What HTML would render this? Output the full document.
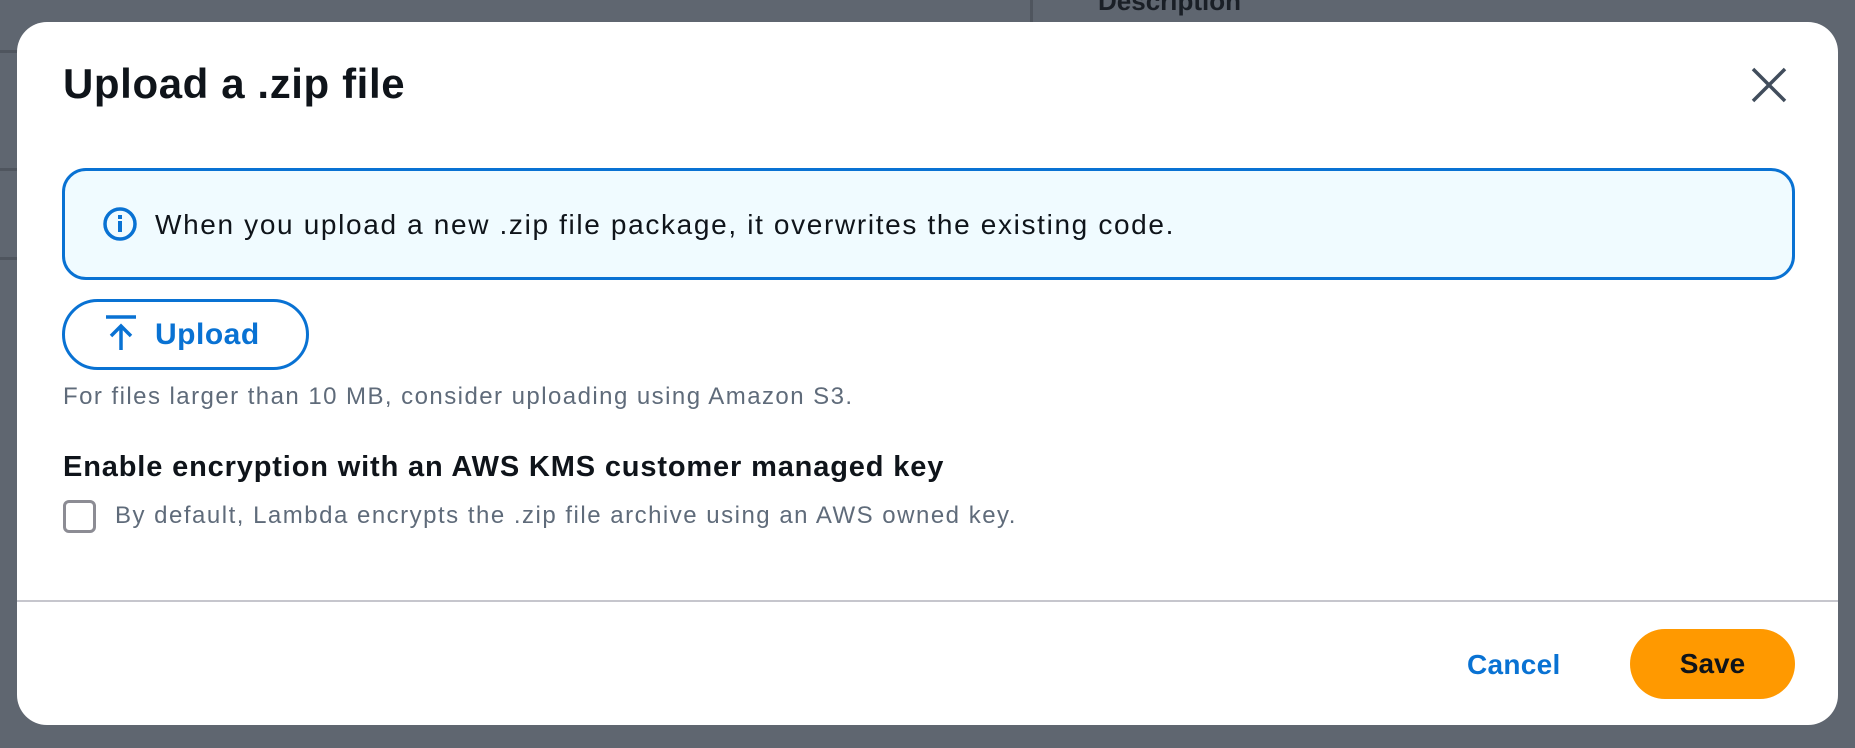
<!DOCTYPE html>
<html><head><meta charset="utf-8"><style>
*{box-sizing:border-box;margin:0;padding:0}
body{width:1855px;height:748px;background:#5f6670;position:relative;overflow:hidden;font-family:"Liberation Sans",sans-serif;}
.bgline{position:absolute;background:#4f555e;height:3px}
.modal{position:absolute;left:17px;top:22px;width:1821px;height:703px;background:#fff;border-radius:30px;}
.abs{position:absolute}
h1{position:absolute;left:46px;top:38px;font-size:42px;font-weight:bold;color:#0f141a;letter-spacing:0.6px}
.info{position:absolute;left:45px;top:146px;width:1733px;height:112px;border:3px solid #0972d3;border-radius:24px;background:#f0fbff}
.info span{position:absolute;left:90px;top:38px;font-size:28px;color:#0f141a;letter-spacing:1.65px}
.up{position:absolute;left:45px;top:277px;width:247px;height:71px;border:3px solid #0972d3;border-radius:36px}
.up span{position:absolute;left:90px;top:16px;font-size:30px;font-weight:bold;color:#0972d3;letter-spacing:0.5px}
.help{position:absolute;left:46px;top:361px;font-size:24px;color:#5f6b7a;letter-spacing:1.45px}
.h2{position:absolute;left:46px;top:429px;font-size:29px;font-weight:bold;color:#0f141a;letter-spacing:0.85px}
.cb{position:absolute;left:46px;top:478px;width:33px;height:33px;border:3px solid #8c8c94;border-radius:6px}
.cbt{position:absolute;left:98px;top:480px;font-size:24px;color:#5f6b7a;letter-spacing:1.5px}
.div{position:absolute;left:0;top:578px;width:100%;height:2px;background:#c6c6cd}
.cancel{position:absolute;left:1450px;top:627px;font-size:28px;font-weight:bold;color:#0972d3;letter-spacing:0.3px}
.save{position:absolute;left:1613px;top:607px;width:165px;height:70px;border-radius:35px;background:#ff9900;font-size:28px;font-weight:bold;color:#0f141a;text-align:center;line-height:70px}
</style></head><body>
<div class="bgline" style="left:0;top:50px;width:20px"></div>
<div class="bgline" style="left:0;top:168px;width:20px"></div>
<div class="bgline" style="left:0;top:257px;width:20px"></div>
<div class="bgline" style="left:1030px;top:0;width:3px;height:22px"></div>
<div class="abs" style="left:1098px;top:-14px;font-size:26px;font-weight:bold;color:#1a1f26">Description</div>
<div class="modal">
<h1>Upload a .zip file</h1>
<svg class="abs" style="left:1734px;top:45px" width="36" height="36" viewBox="0 0 36 36"><path d="M2 2L34 34M34 2L2 34" stroke="#414d5c" stroke-width="3.5"/></svg>
<div class="info">
<svg class="abs" style="left:37px;top:35px" width="36" height="36" viewBox="0 0 36 36"><circle cx="18" cy="18" r="15" fill="none" stroke="#0972d3" stroke-width="3.5"/><rect x="16" y="15" width="4" height="11" fill="#0972d3"/><rect x="16" y="9" width="4" height="4" fill="#0972d3"/></svg>
<span>When you upload a new .zip file package, it overwrites the existing code.</span>
</div>
<div class="up">
<svg class="abs" style="left:38px;top:12px" width="36" height="40" viewBox="0 0 36 40"><path d="M3 3H33M18 36V12M8 22L18 12L28 22" stroke="#0972d3" stroke-width="3.5" fill="none"/></svg>
<span>Upload</span>
</div>
<div class="help">For files larger than 10 MB, consider uploading using Amazon S3.</div>
<div class="h2">Enable encryption with an AWS KMS customer managed key</div>
<div class="cb"></div>
<div class="cbt">By default, Lambda encrypts the .zip file archive using an AWS owned key.</div>
<div class="div"></div>
<div class="cancel">Cancel</div>
<div class="save">Save</div>
</div>
</body></html>
